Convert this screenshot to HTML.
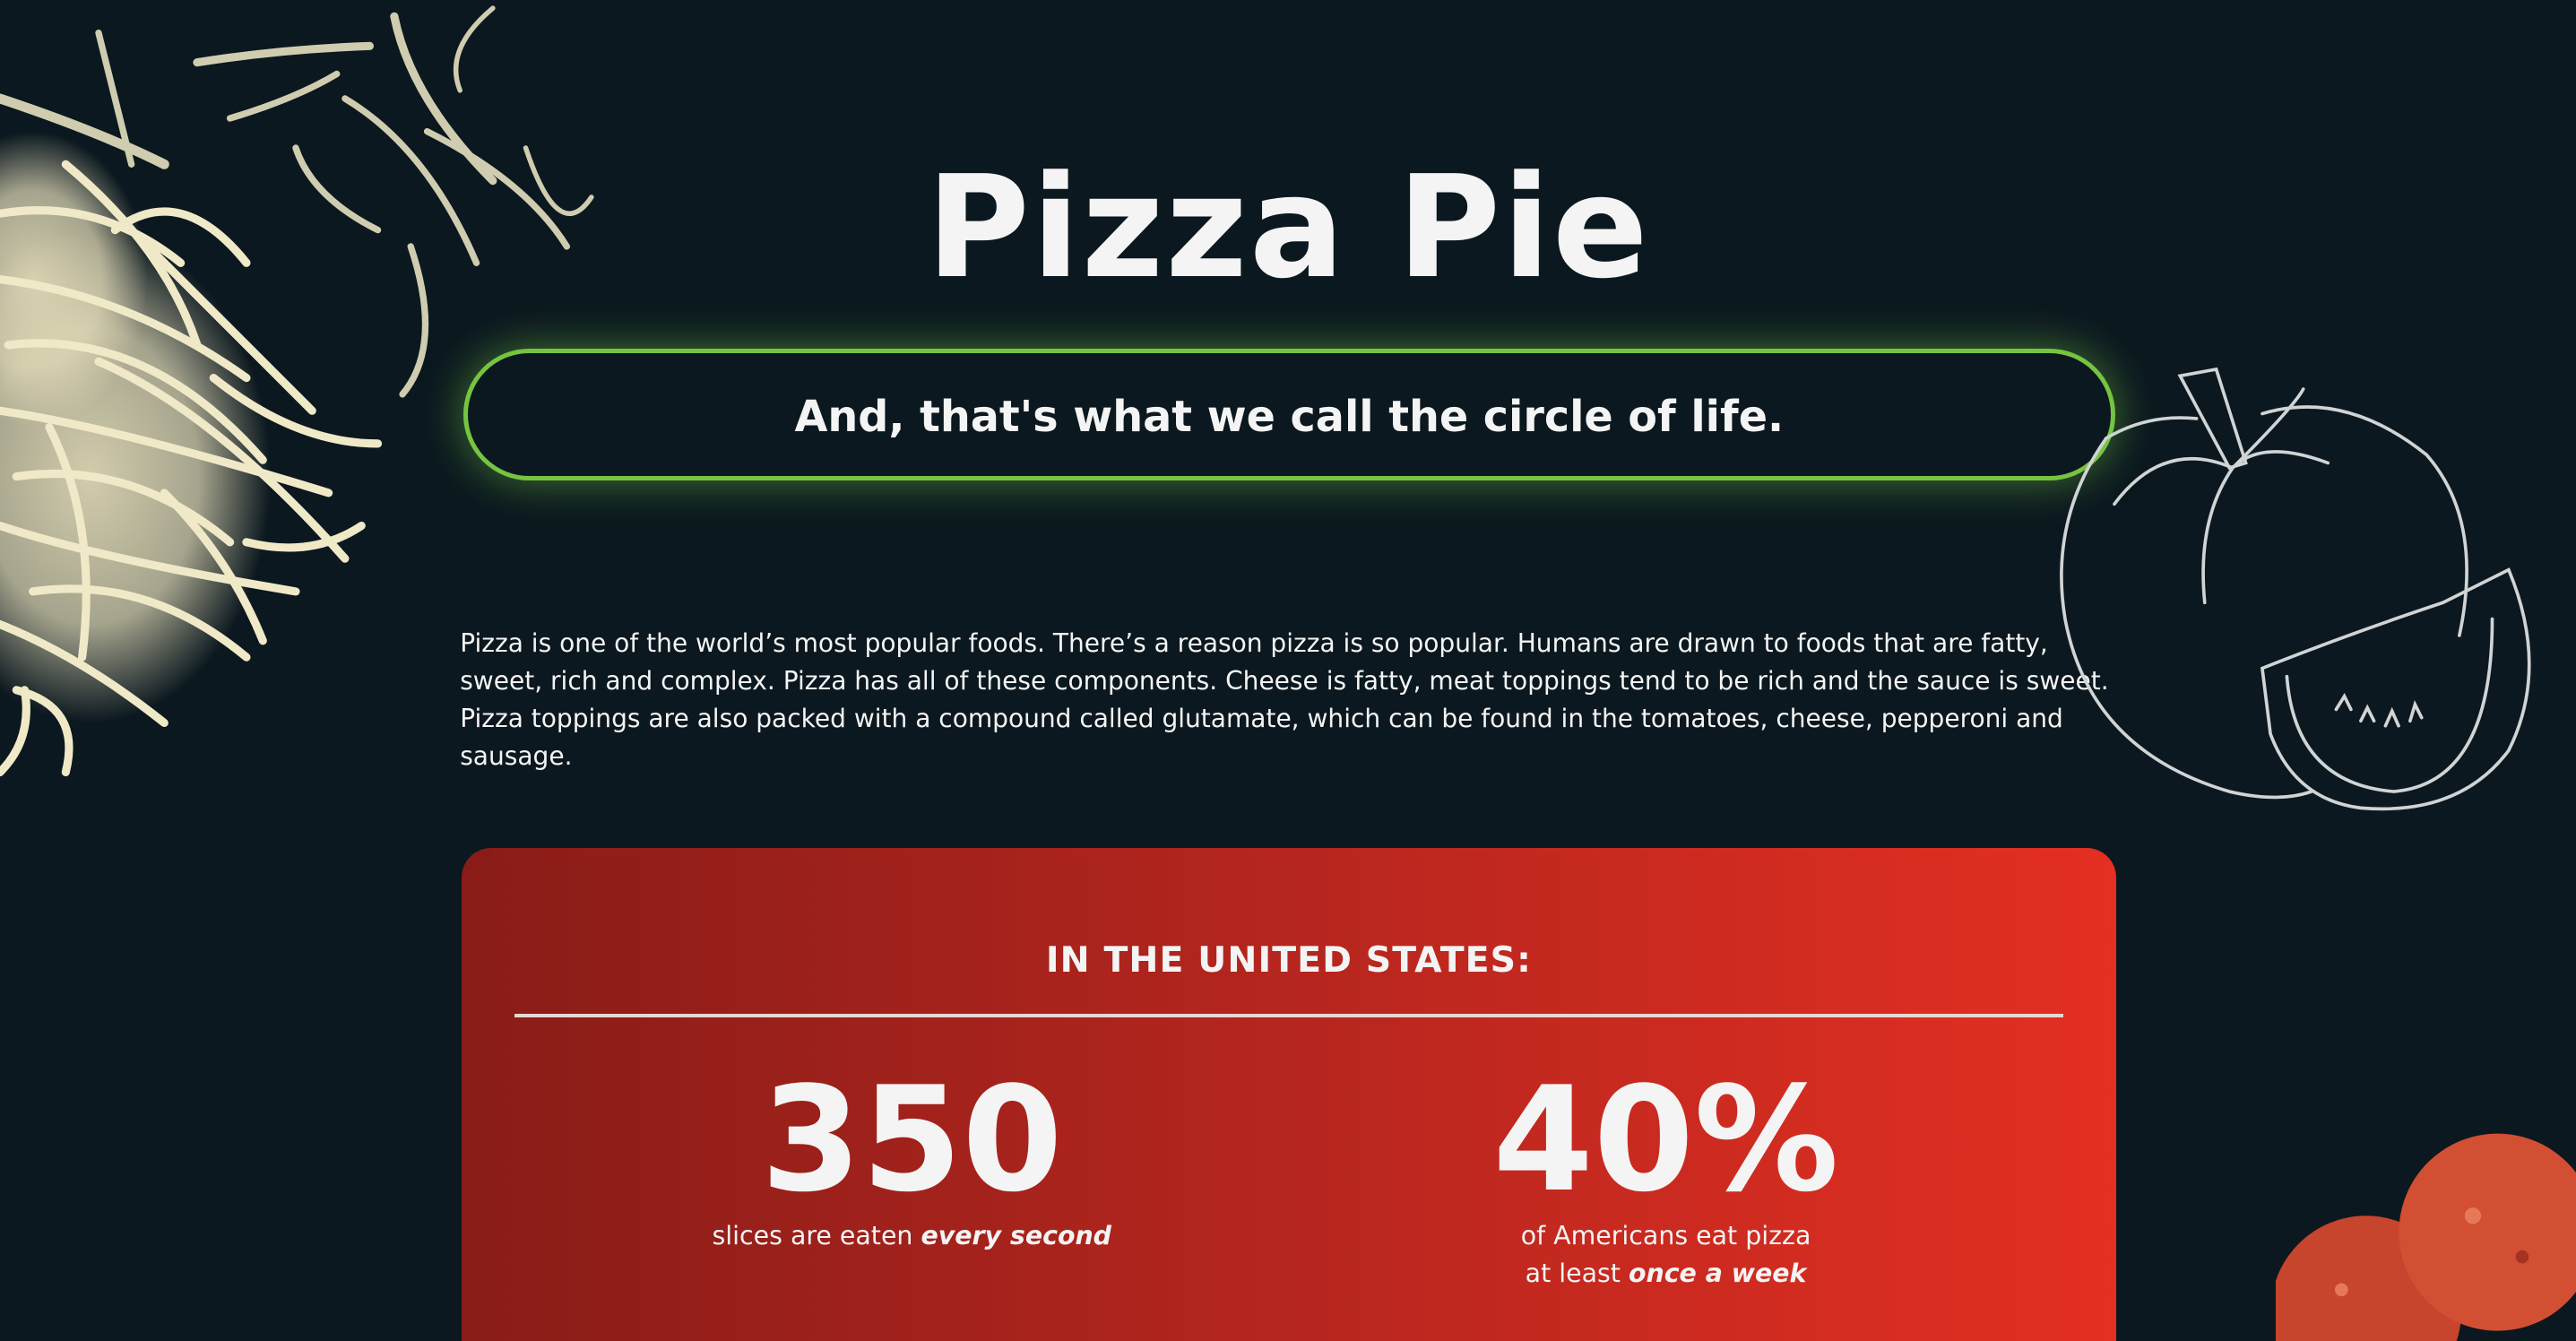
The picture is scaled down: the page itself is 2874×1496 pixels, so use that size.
<!DOCTYPE html>
<html><head><meta charset="utf-8"><style>
html,body{margin:0;padding:0;background:#0b181f;overflow:hidden}
body{width:2874px;height:1496px}
#w{zoom:1.83291;width:1568px;height:816px;position:relative;overflow:hidden;font-family:"DejaVu Sans","Liberation Sans",sans-serif;color:#f4f4f4}
h1{position:absolute;left:0;width:1568px;top:89px;margin:0;text-align:center;font-size:86px;font-weight:bold;line-height:100px;letter-spacing:1px}
.pill{position:absolute;left:282px;top:212px;width:1000px;border:3px solid #76c442;border-radius:40px;box-shadow:0 0 26px rgba(118,196,66,.55);display:flex;align-items:center;justify-content:center;font-weight:bold;font-size:26px;padding-top:4px;box-sizing:content-box;height:71px;background:#0b181f}
p{position:absolute;left:280px;top:380px;width:1010px;margin:0;font-size:15.3px;line-height:23px}
.card{position:absolute;left:281px;top:516px;width:1007px;height:300px;border-radius:18px 18px 0 0;background:linear-gradient(90deg,#891c18,#b5261e 50%,#e42f22)}
.card h2{position:absolute;left:0;width:100%;top:56px;margin:0;text-align:center;font-size:21.5px;font-weight:bold;letter-spacing:.6px}
.card hr{position:absolute;left:32px;top:101px;width:943px;margin:0;border:0;height:2px;background:#e8d8d4}
.st{position:absolute;top:131px;width:400px;text-align:center}
.st b.n{display:block;font-size:88px;line-height:94px}
.st span{font-size:15.5px;line-height:23px;display:block}
</style></head><body><div id="w">
<svg style="position:absolute;left:0;top:0" width="380" height="500" viewBox="0 0 380 500">
<defs><radialGradient id="rg"><stop offset="0" stop-color="#e8e0bc" stop-opacity=".9"/><stop offset=".6" stop-color="#e8e0bc" stop-opacity=".7"/><stop offset="1" stop-color="#e8e0bc" stop-opacity="0"/></radialGradient></defs>
<ellipse cx="55" cy="290" rx="110" ry="150" fill="url(#rg)"/><ellipse cx="20" cy="170" rx="70" ry="90" fill="url(#rg)"/>
<g fill="none" stroke="#e6e0c0" stroke-linecap="round" opacity=".9">
<path d="M120 38 Q170 30 225 28" stroke-width="5"/><path d="M140 72 Q180 60 205 45" stroke-width="4"/>
<path d="M240 10 Q250 60 300 110" stroke-width="5"/><path d="M210 60 Q260 90 290 160" stroke-width="4"/>
<path d="M260 80 Q320 110 345 150" stroke-width="4"/><path d="M300 5 Q270 30 280 55" stroke-width="3"/>
<path d="M250 150 Q270 210 245 240" stroke-width="4"/><path d="M320 90 Q340 150 360 120" stroke-width="3"/>
<path d="M180 90 Q190 120 230 140" stroke-width="4"/><path d="M60 20 Q70 60 80 100" stroke-width="4"/>
<path d="M0 60 Q60 80 100 100" stroke-width="6"/>
</g>
<g fill="none" stroke="#f0e9c8" stroke-linecap="round" stroke-width="5">
<path d="M0 130 Q60 120 110 160"/><path d="M0 170 Q80 180 150 230"/><path d="M5 210 Q90 200 160 280"/>
<path d="M0 250 Q70 260 200 300"/><path d="M10 290 Q80 280 140 330"/><path d="M0 320 Q60 340 180 360"/>
<path d="M20 360 Q90 350 150 400"/><path d="M0 380 Q50 400 100 440"/><path d="M10 420 Q50 430 40 470"/>
<path d="M40 100 Q100 150 120 210"/><path d="M90 150 Q140 200 190 250"/><path d="M60 220 Q130 250 210 340"/>
<path d="M100 300 Q140 340 160 390"/><path d="M30 260 Q60 320 50 400"/><path d="M130 230 Q180 270 230 270"/>
<path d="M0 470 Q20 450 15 420"/><path d="M70 140 Q110 110 150 160"/><path d="M150 330 Q190 340 220 320"/>
</g>
</svg>
<h1>Pizza Pie</h1>
<div class="pill">And, that's what we call the circle of life.</div>
<p>Pizza is one of the world’s most popular foods. There’s a reason pizza is so popular. Humans are drawn to foods that are fatty, sweet, rich and complex. Pizza has all of these components. Cheese is fatty, meat toppings tend to be rich and the sauce is sweet. Pizza toppings are also packed with a compound called glutamate, which can be found in the tomatoes, cheese, pepperoni and sausage.</p>
<svg style="position:absolute;left:1227px;top:207px" width="341" height="306" viewBox="0 0 341 306" fill="none" stroke="#d0d4d4" stroke-width="2" stroke-linecap="round">
<path d="M55 60 Q20 110 30 170 Q45 250 130 275 Q160 282 180 275"/>
<path d="M55 60 Q80 45 110 48 M150 45 Q200 30 250 70 Q285 110 270 180"/>
<path d="M100 22 L122 18 L140 75 L130 78 Z"/>
<path d="M132 78 Q110 110 115 160 M132 78 Q150 60 190 75 M132 78 Q90 60 60 100 M132 78 Q170 40 175 30"/>
<path d="M150 200 Q200 180 260 160 L300 140 Q325 200 300 250 Q270 290 210 285 Q170 280 155 240 Z"/>
<path d="M165 205 Q170 270 230 275 Q290 270 290 170"/>
<path d="M195 225 l5 -8 l4 8 M210 232 l4 -8 l4 8 M225 235 l4 -9 l4 9 M240 232 l3 -10 l4 8"/>
</svg>
<div class="card">
<h2>IN THE UNITED STATES:</h2><hr>
<div class="st" style="left:74px"><b class="n">350</b><span>slices are eaten <b><i>every second</i></b></span></div>
<div class="st" style="left:533px"><b class="n">40%</b><span>of Americans eat pizza<br>at least <b><i>once a week</i></b></span></div>
</div>
<svg style="position:absolute;left:1385px;top:670px" width="183" height="146">
<circle cx="55" cy="128" r="58" fill="#c7452c"/><circle cx="135" cy="80" r="60" fill="#d24f33"/>
<circle cx="120" cy="70" r="5" fill="#e8785a"/><circle cx="150" cy="95" r="4" fill="#a63220"/><circle cx="40" cy="115" r="4" fill="#e8785a"/>
</svg>
</div></body></html>
